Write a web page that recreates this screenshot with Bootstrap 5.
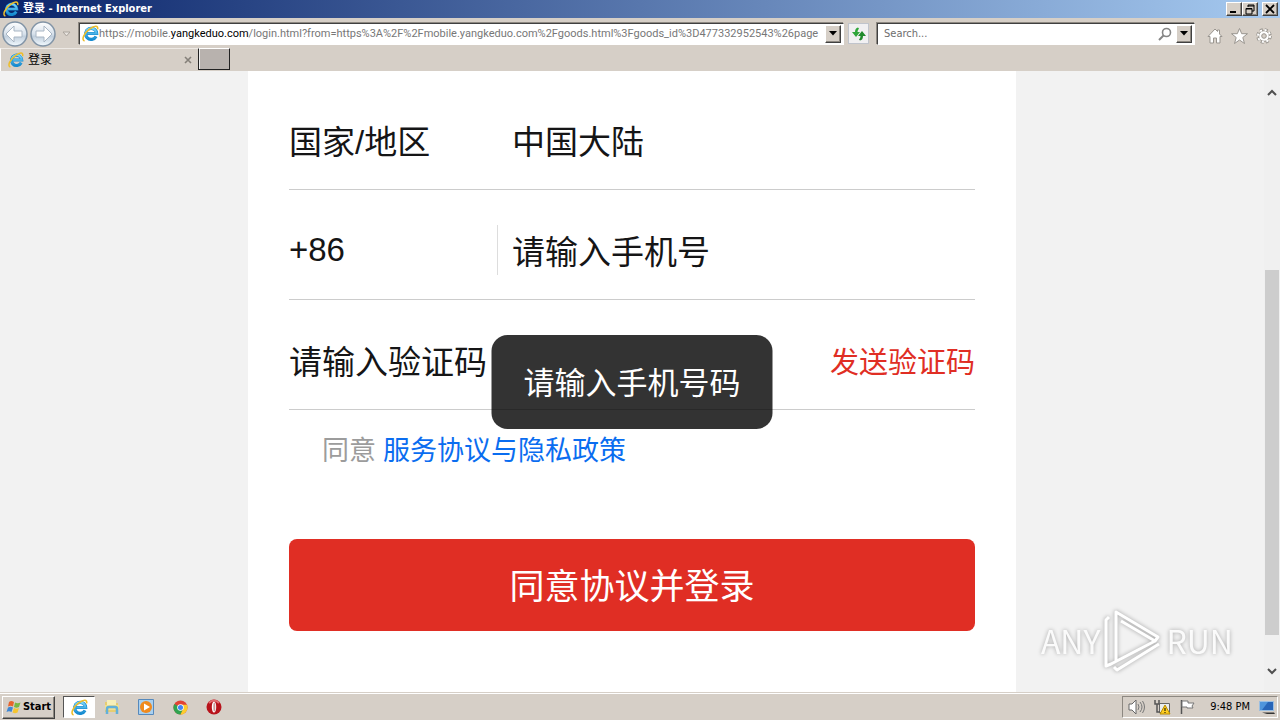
<!DOCTYPE html>
<html lang="zh-CN">
<head>
<meta charset="utf-8">
<meta name="viewport" content="width=device-width, initial-scale=1">
<title>登录 - Internet Explorer</title>
<link href="https://cdn.jsdelivr.net/npm/bootstrap@5.3.0/dist/css/bootstrap.min.css" rel="stylesheet">
<style>
  :root { --face: #d6cfc7; --ink: #151516; --red: #e02e24; }
  body { font: 11px/14px "DejaVu Sans Condensed", "Noto Sans CJK SC", sans-serif; color: #000; background: var(--face); }
  svg { display: block; flex: none; }
  button { font: inherit; color: inherit; border: 0; padding: 0; background: none; }
  a { text-decoration: none; }

  .titlebar { height: 18px; padding: 0 2px 0 3px; color: #fff; font-weight: 700; background: linear-gradient(90deg, #0a246a, #a6caf0); }
  .bevel { background: var(--face); border: 1px solid; border-color: #fff #404040 #404040 #fff; box-shadow: inset -1px -1px #8d8881; display: flex; align-items: center; justify-content: center; color: #000; }
  .winbtn { width: 16px; height: 14px; }
  .toolbar { height: 30px; padding: 1px 8px 0 2px; }
  .sunken { height: 22px; background: #fff; border: 1px solid; border-color: #404040 #fff #fff #404040; box-shadow: -1px -1px #8d8881; padding: 1px 2px; }
  .sunken input { border: 0; padding: 0; outline: 0; background: none; width: 100%; color: #6d6d6d; }
  .sunken input::placeholder { color: #6d6d6d; opacity: 1; }
  .address { width: 765px; flex: 0 1 auto; }
  .url { color: #777; white-space: nowrap; font-family: Roboto, sans-serif; min-width: 0; }
  .url b { color: #000; font-weight: 400; }
  .drop { width: 16px; height: 18px; flex: none; }
  .refresh { width: 21px; height: 21px; border: 1px solid #c0c4cc; background: #f1f0f2; }
  .tabs { height: 23px; }
  .tab { width: 198px; padding: 0 6px 0 7px; border-left: 1px solid #fff; border-top: 1px solid #eeeae6; font-size: 12px; }
  .newtab { width: 32px; height: 22px; background: #b8b2ae; border: 1px solid; border-color: #fff #222 #222 #222; box-shadow: inset 1px 0 #eee; }

  .viewport { background: #f2f2f2; }
  .panel { width: 100%; max-width: 768px; background: #fff; padding: 9px 41px 60px; color: var(--ink); font-family: "Liberation Sans", "Noto Sans CJK SC", sans-serif; font-size: 33px; line-height: 40px; }
  .field { height: 110px; border-bottom: 1px solid #ccc; padding-top: 16px; }
  .field input { border: 0; padding: 0; outline: 0; width: 100%; background: none; color: var(--ink); }
  .field input::placeholder { color: var(--ink); opacity: 1; }
  .key { width: 223px; flex: none; }
  .code { width: 209px; height: 50px; flex: none; border-right: 1px solid #ddd; margin: 0 14px 6px 0; display: flex; align-items: center; }
  .send { font-size: 29px; color: var(--red); flex: none; }
  .agree { font-size: 27px; padding: 21px 0 0 33px; color: #9c9c9c; gap: 7px; }
  .agree a { color: #0a6df0; }
  .login { height: 92px; margin-top: 68px; border-radius: 8px; background: var(--red); color: #fff; font-size: 35px; padding-top: 4px; }
  .notice { background: rgba(0,0,0,.8); color: #fff; border-radius: 16px; padding: 29px 32px 25px; font: 31px/40px "Liberation Sans", "Noto Sans CJK SC", sans-serif; white-space: nowrap; }
  .scroll { width: 16px; background: #f0f0f0; padding: 18px 1px 17px; }
  .thumb { background: #cdcdcd; width: 14px; flex: 364 0 0; }
  .brand { right: 47px; bottom: 20px; color: rgba(255,255,255,.9); font: 32px/60px "Noto Sans CJK SC", sans-serif; filter: drop-shadow(0 0 2px rgba(0,0,0,.35)); gap: 4px; }

  .taskbar { height: 28px; border-top: 1px solid #d6cfc7; box-shadow: inset 0 1px #fff; padding: 1px 2px 0; }
  .start { width: 53px; height: 23px; font-weight: 700; font-size: 11px; gap: 1px; }
  .task { width: 34px; height: 22px; display: flex; align-items: center; justify-content: center; }
  .task.on { width: 32px; background: #fff; border: 1px solid; border-color: #555 #fff #fff #555; margin-left: 8px; }
  .tray { height: 22px; width: 156px; border: 1px solid; border-color: #8d8881 #fff #fff #8d8881; padding: 0 1px 0 5px; }
</style>
</head>
<body class="d-flex flex-column min-vh-100">
<svg width="0" height="0" class="position-absolute" aria-hidden="true">
  <defs>
    <linearGradient id="blue" x2="0" y2="1"><stop stop-color="#79d5fa"/><stop offset="1" stop-color="#168bd0"/></linearGradient>
    <linearGradient id="glass" x2="0" y2="1"><stop stop-color="#fff"/><stop offset=".5" stop-color="#d7e1eb"/><stop offset=".6" stop-color="#c1cfdd"/><stop offset="1" stop-color="#f3faff"/></linearGradient>
    <symbol id="ie" viewBox="0 0 16 16">
      <path d="M13.2 10.8A5.2 5.2 0 1 1 13.8 8H5" fill="none" stroke="#168bd0" stroke-width="3"/>
      <path d="M13.2 10.8A5.2 5.2 0 1 1 13.8 8H5" fill="none" stroke="url(#blue)" stroke-width="2"/>
      <path d="M2.4 15C-1 14 2 7.500 7 3.800S15.500.2 14.700 4.200" fill="none" stroke="#edbd2a" stroke-width="1.500"/>
    </symbol>
    <symbol id="down" viewBox="0 0 8 5"><path d="M0 0h8L4 4.500z" fill="#000"/></symbol>
  </defs>
</svg>

<header>
  <div class="titlebar d-flex align-items-center">
    <svg width="16" height="16"><use href="#ie"/></svg>
    <span class="ms-1 me-auto">登录 - Internet Explorer</span>
    <button class="winbtn bevel" aria-label="Minimize"><svg width="12" height="10"><path d="M2 8h6" stroke="#000" stroke-width="2"/></svg></button>
    <button class="winbtn bevel" aria-label="Restore"><svg width="12" height="11"><path d="M4 3V1h6v6H8M4 2h6M2 4.500h6V10H2zM2 5h6" fill="none" stroke="#000"/></svg></button>
    <button class="winbtn bevel ms-1" aria-label="Close"><svg width="10" height="10"><path d="M1 1l8 8M9 1L1 9" stroke="#000" stroke-width="1.800"/></svg></button>
  </div>

  <div class="toolbar d-flex align-items-center">
    <button aria-label="Back"><svg width="28" height="28" viewBox="0 0 28 28"><circle cx="13" cy="14" r="12" fill="url(#glass)" stroke="#8294a6" stroke-width="1.500"/><path d="M12 6l-8 8 8 8v-5h8v-6h-8z" fill="#fff" stroke="#a9b6c4"/></svg></button>
    <button aria-label="Forward"><svg width="28" height="28" viewBox="0 0 28 28"><circle cx="13" cy="14" r="12" fill="url(#glass)" stroke="#8294a6" stroke-width="1.500"/><path d="M14 6l8 8-8 8v-5H6v-6h8z" fill="#fff" stroke="#a9b6c4"/></svg></button>
    <button class="ms-1 me-1" aria-label="Recent pages"><svg width="9" height="6"><path d="M1 1h7L4.500 5z" fill="#e8e4df" stroke="#aaa49d"/></svg></button>
    <div class="sunken address d-flex align-items-center ms-1">
      <svg width="17" height="17"><use href="#ie"/></svg>
      <div class="url flex-grow-1">https://mobile.<b>yangkeduo.com</b>/login.html?from=https%3A%2F%2Fmobile.yangkeduo.com%2Fgoods.html%3Fgoods_id%3D477332952543%26page</div>
      <button class="drop bevel" aria-label="Address list"><svg width="8" height="5"><use href="#down"/></svg></button>
    </div>
    <button class="refresh mx-1 d-flex align-items-center justify-content-center flex-shrink-0" aria-label="Refresh"><svg width="16" height="16" viewBox="0 0 16 16"><path d="M7 1.500Q4 2 4 6H1l4 5 4-5H6.500Q6.500 4 8 2.500z" fill="#2fa63a"/><path d="M9 14.500q3-.5 3-4.500h3l-4-5-4 5h2.500q0 2-1.500 3.500z" fill="#1f8a2c"/></svg></button>
    <div class="sunken d-flex align-items-center flex-grow-1 ms-1">
      <input type="text" class="ms-1" placeholder="Search..." aria-label="Search">
      <svg width="14" height="14" class="me-1"><circle cx="8.500" cy="5.500" r="4" fill="none" stroke="#858585" stroke-width="1.600"/><path d="M5.500 8.500L1 13" stroke="#858585" stroke-width="2"/></svg>
      <button class="drop bevel" aria-label="Search options"><svg width="8" height="5"><use href="#down"/></svg></button>
    </div>
    <div class="d-flex gap-2 ps-2 pt-1 ms-1">
      <button aria-label="Home"><svg width="16" height="16"><path d="M1 8.500L8 1l2.500 2.500V2h2v4L15 8.500h-2V15H9.500v-5h-3v5H3V8.500z" fill="#fff" stroke="#99958f"/></svg></button>
      <button aria-label="Favorites"><svg width="17" height="16"><path d="M8.500 0.500l2.200 5.200H16.500l-4.700 3.800L13.500 15.500l-5-3.500-5 3.500 1.700-6L.5 5.700h5.800z" fill="#fff" stroke="#99958f"/></svg></button>
      <button aria-label="Tools"><svg width="16" height="16" viewBox="0 0 16 16"><circle cx="8" cy="8" r="6.300" fill="none" stroke="#99958f" stroke-width="3" stroke-dasharray="2.950 2"/><circle cx="8" cy="8" r="5.300" fill="#fff" stroke="#99958f"/><circle cx="8" cy="8" r="6" fill="none" stroke="#fff" stroke-width="2" stroke-dasharray="2 2.700"/><circle cx="8" cy="8" r="2.300" fill="var(--face)" stroke="#99958f"/></svg></button>
    </div>
  </div>

  <div class="tabs d-flex">
    <div class="tab d-flex align-items-center">
      <svg width="16" height="16"><use href="#ie"/></svg><span class="ms-1 me-auto">登录</span>
      <button aria-label="Close tab"><svg width="8" height="8"><path d="M1 1l6 6M7 1L1 7" stroke="#858079" stroke-width="1.600"/></svg></button>
    </div>
    <button class="newtab" aria-label="New tab"></button>
  </div>
</header>

<main class="viewport d-flex flex-grow-1 position-relative">
  <div class="flex-grow-1 d-flex justify-content-center position-relative">
    <form class="panel">
      <div class="field d-flex align-items-center"><span class="key">国家/地区</span><button type="button">中国大陆</button></div>
      <div class="field d-flex align-items-center"><label class="code" for="phone">+86</label><input id="phone" type="tel" placeholder="请输入手机号"></div>
      <div class="field d-flex align-items-center"><input type="text" aria-label="验证码" placeholder="请输入验证码"><button type="button" class="send">发送验证码</button></div>
      <div class="agree d-flex"><span>同意</span><a href="#">服务协议与隐私政策</a></div>
      <button type="submit" class="login w-100">同意协议并登录</button>
    </form>
    <div class="notice position-absolute top-50 start-50 translate-middle" role="alert">请输入手机号码</div>
  </div>
  <div class="brand position-absolute d-flex align-items-center">
    <span>ANY</span>
    <svg width="58" height="64" viewBox="0 0 58 64" fill="none" stroke="#fff" stroke-width="3" stroke-linejoin="round"><path d="M12 53V4l42 25-3 4L17 13M5 9l-3 3v46l5-2 44-23M10 59l3 3 42-26M12 12v42"/></svg>
    <span>RUN</span>
  </div>
  <div class="scroll d-flex flex-column align-items-center">
    <svg width="12" height="8"><path d="M2 6l4-4 4 4" fill="none" stroke="#505050" stroke-width="2"/></svg>
    <div style="flex: 173 0 0"></div>
    <div class="thumb"></div>
    <div style="flex: 32 0 0"></div>
    <svg width="12" height="8"><path d="M2 2l4 4 4-4" fill="none" stroke="#505050" stroke-width="2"/></svg>
  </div>
</main>

<footer class="taskbar d-flex align-items-center">
  <button class="start bevel"><svg width="16" height="16" viewBox="0 0 16 16"><path d="M3 3c2-1.500 3-1 5 0L7 7.500c-2-1-3-1-5 0z" fill="#e8642c"/><path d="M9 3.500c2 1 3.500 1 5.500 0L13 8c-2 1-3 1-5 0z" fill="#78b843"/><path d="M2 8.500c2-1 3-1 5 0L5.500 13c-2-1-3-1-5 0z" fill="#3f87d4"/><path d="M8 9c2 1 3 1 5 0l-1.500 4.500c-2 1-3 1-5 0z" fill="#f6c52f"/></svg>Start</button>
  <button class="task on" aria-label="Internet Explorer"><svg width="17" height="17"><use href="#ie"/></svg></button>
  <button class="task" aria-label="Explorer"><svg width="16" height="16"><path d="M1 3h5l1 1h7v9H1z" fill="#e6cd72"/><path d="M3 1h9v5H3z" fill="#f7efb9"/><path d="M1 6h14v5H1z" fill="#f1df91"/><path d="M3 15v-5q0-2 2-2h6q2 0 2 2v5" fill="none" stroke="#62b1d9" stroke-width="2.500"/></svg></button>
  <button class="task" aria-label="Media Player"><svg width="16" height="16"><path d="M.5.5h15v15H.5z" fill="#a9d0ef" stroke="#5689bc"/><circle cx="8" cy="8" r="6" fill="#f08a1d"/><path d="M6 4.500l6 3.500-6 3.500z" fill="#fff"/></svg></button>
  <button class="task" aria-label="Chrome"><svg width="15" height="15" viewBox="0 0 16 16"><circle cx="8" cy="8" r="7.500" fill="#e24335"/><path d="M8 8L1.500 4.200A7.500 7.500 0 0 0 8 15.500l3-6z" fill="#31a350"/><path d="M8 5h6.900A7.500 7.500 0 0 1 8 15.500L11 9z" fill="#fccd2d"/><circle cx="8" cy="8" r="3.500" fill="#fff"/><circle cx="8" cy="8" r="2.700" fill="#4285f4"/></svg></button>
  <button class="task" aria-label="Opera"><svg width="16" height="16"><circle cx="8" cy="8" r="7.500" fill="#b8131b"/><path d="M3 4q5-5 10 0" stroke="#e26c70" stroke-width="2" fill="none"/><ellipse cx="8" cy="8" rx="2.200" ry="5.500" fill="#fff"/><ellipse cx="8.300" cy="8" rx="1" ry="4.500" fill="#c99"/></svg></button>
  <div class="tray d-flex align-items-center ms-auto">
    <svg width="18" height="16"><path d="M1 5h3l4-4v14l-4-4H1z" fill="#fff" stroke="#666"/><path d="M10 5q2 3 0 6M12 3q4 5 0 10M14.500 2q4 6 0 12" fill="none" stroke="#777"/></svg>
    <svg width="17" height="16" class="ms-2"><path d="M5.500 4.500h10v9h-10z" fill="#e9edef" stroke="#666"/><path d="M1 1v4h4V1M3 5v8h3" fill="none" stroke="#555" stroke-width="1.500"/><path d="M11 6l5 9H6z" fill="#ffce20" stroke="#b78a00"/><path d="M11 9v3m0 1v1" stroke="#000"/></svg>
    <svg width="17" height="16" class="ms-2"><path d="M2.500 1v14" stroke="#555" stroke-width="1.500"/><path d="M3 2h6v2h6l-2 3 1 2H8V8H3z" fill="#fff" stroke="#777"/></svg>
    <span class="ms-auto me-1 text-nowrap">9:48 PM</span>
    <svg width="18" height="16" class="ms-1"><path d="M1.500 2.500h14v9h-14z" fill="#2865b8" stroke="#9bbfe2"/><path d="M2 3h8L4 11H2z" fill="#4f95dc"/><path d="M4 13.500h12l1 1.500H9z" fill="#333"/></svg>
  </div>
</footer>
<script src="https://cdn.jsdelivr.net/npm/bootstrap@5.3.0/dist/js/bootstrap.bundle.min.js"></script>
</body>
</html>
